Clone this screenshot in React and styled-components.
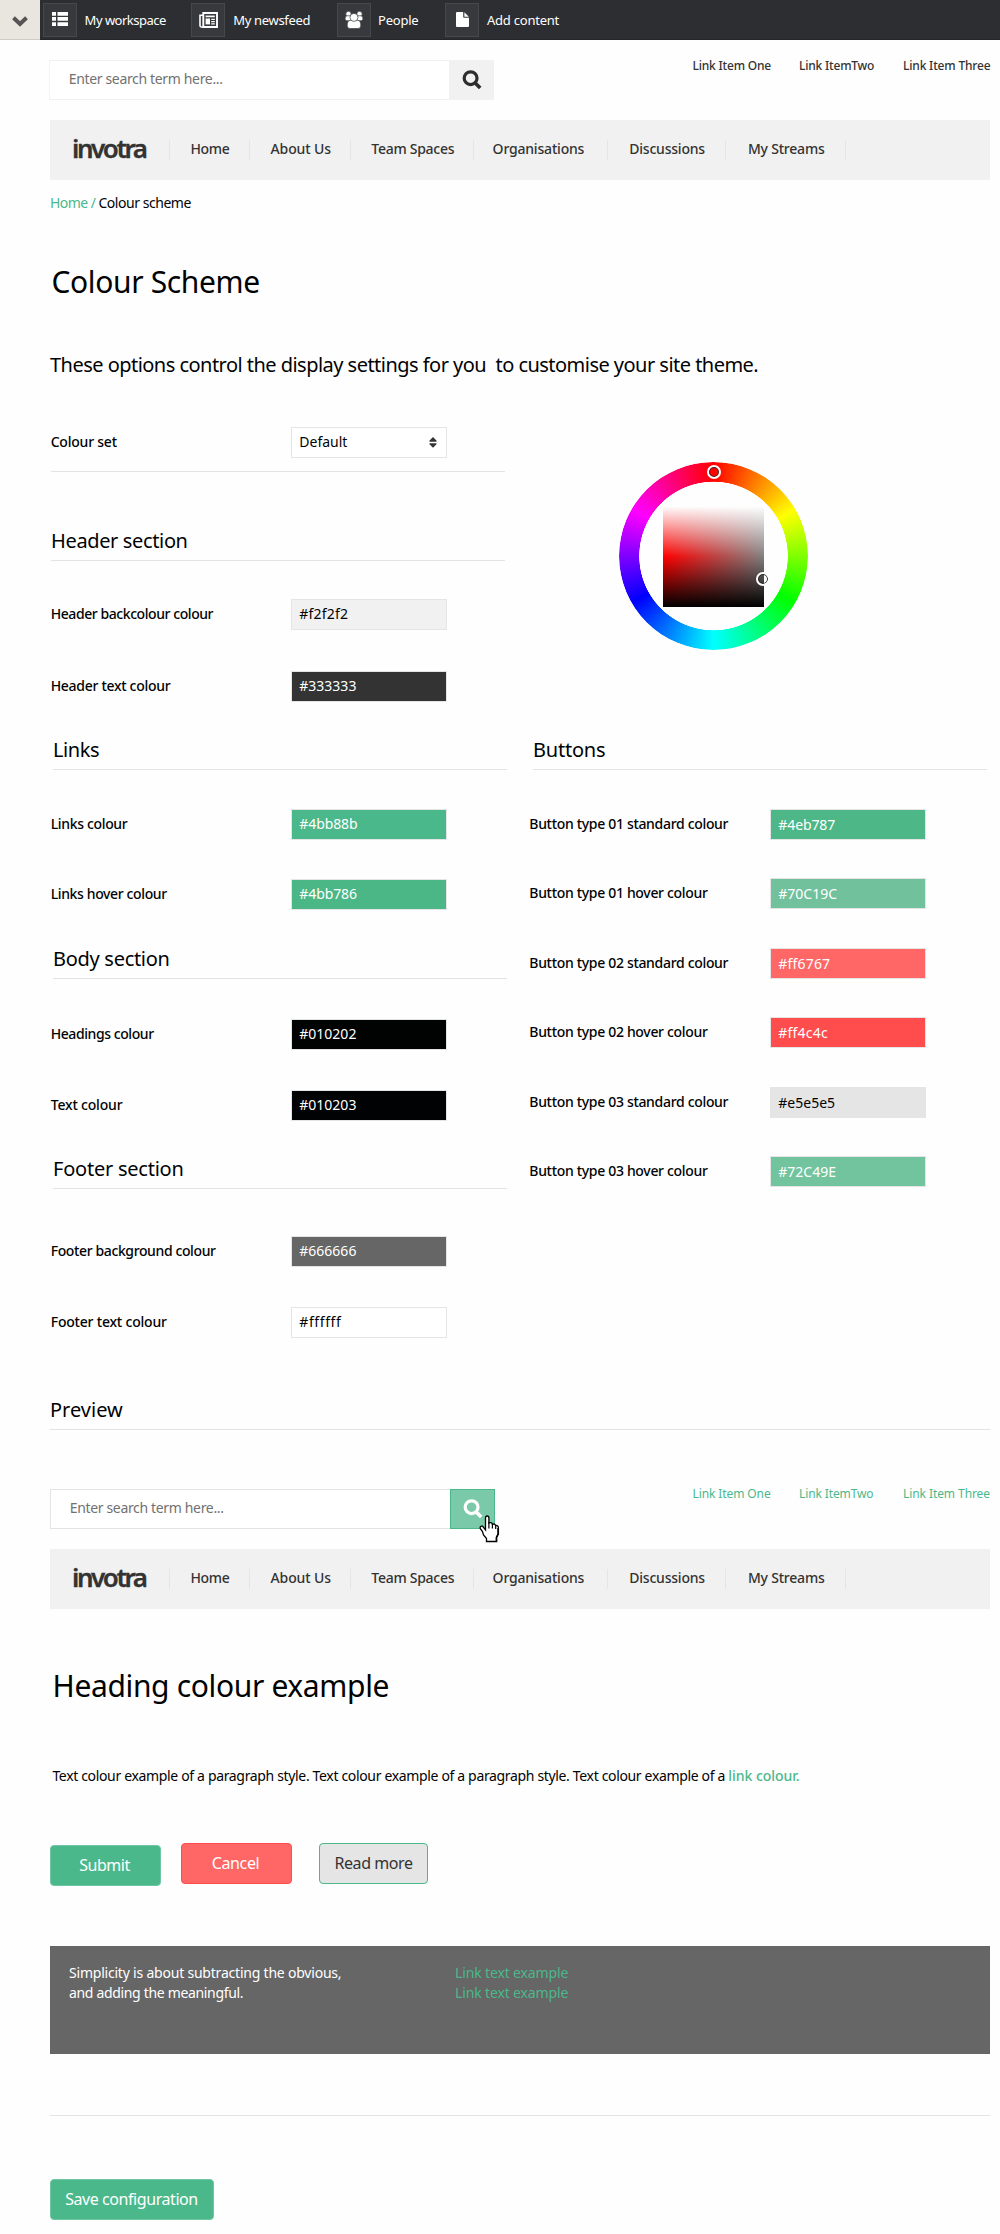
import React from 'react';
import styled, { createGlobalStyle } from 'styled-components';

const GlobalStyle = createGlobalStyle`
  *, *::before, *::after { box-sizing: border-box; }
  body {
    margin: 0;
    background: #fefefe;
    color: #010203;
    font-family: "Noto Sans", "Open Sans", sans-serif;
    font-size: 14px;
  }
  h1, h2, p { margin: 0; font-weight: 400; }
  a { color: inherit; text-decoration: none; }
`;

const Text = styled.span`
  letter-spacing: ${(p) => p.$track || 0}px;
  white-space: pre;
`;

/* ---------- toolbar ---------- */
const Toolbar = styled.div`
  display: flex;
  height: 40px;
  background: #2d2e32;
  border-bottom: 1px solid #252629;
`;
const Toggle = styled.div`
  display: flex;
  align-items: center;
  justify-content: center;
  width: 40px;
  height: 40px;
  margin-right: 3px;
  padding-top: 4px;
  background: #e9e5df;
  border-bottom: 1px solid #cfcbc5;
`;
const ToolItem = styled.a`
  display: flex;
  align-items: center;
  height: 40px;
  width: ${(p) => p.$w}px;
  color: #fff;
  font-size: 13px;
  line-height: 18px;
`;
const ToolIcon = styled.span`
  display: flex;
  align-items: center;
  justify-content: center;
  width: 34px;
  height: 34px;
  margin-right: ${(p) => p.$gap}px;
  padding-bottom: ${(p) => p.$lift || 0}px;
  background: #38393c;
  border: 1px solid #47484b;
  svg { display: block; }
`;

/* ---------- page ---------- */
const Page = styled.main`
  display: flex;
  flex-direction: column;
  width: 940px;
  height: 2194px;
  margin-left: 50px;
`;
const HeaderBar = styled.div`
  display: flex;
  justify-content: space-between;
  align-items: flex-start;
  margin-top: ${(p) => p.$top}px;
`;
const Search = styled.div`
  display: flex;
  width: 445px;
  height: 40px;
  margin: ${(p) => p.$drop}px 0 0 ${(p) => p.$left}px;
`;
const SearchField = styled.div`
  flex: 1;
  padding-left: 18.7px;
  border: 1px solid ${(p) => p.$line};
  border-right: 0;
  background: #fff;
  color: #717171;
  line-height: 35px;
`;
const SearchButton = styled.div`
  position: relative;
  display: flex;
  align-items: center;
  justify-content: center;
  width: 45px;
  background: ${(p) => p.$bg};
  border: 1px solid ${(p) => p.$line};
  color: ${(p) => p.$fg};
`;
const Pointer = styled.svg`
  position: absolute;
  left: 28px;
  top: 25px;
  z-index: 1;
`;
const TopLinks = styled.div`
  display: grid;
  grid-template-columns: 106.5px 104px 87px;
  color: ${(p) => p.$fg};
  font-size: 12px;
  font-weight: ${(p) => p.$weight};
  line-height: 17px;
`;
const Nav = styled.nav`
  display: flex;
  align-items: center;
  height: 60px;
  margin-top: 20px;
  background: #f1f1f1;
  color: #333;
`;
const NavItem = styled.a`
  width: ${(p) => p.$w}px;
  height: 20px;
  padding-left: ${(p) => p.$pad}px;
  border-right: 1px solid #e5e5e5;
  font-weight: 500;
  line-height: 17px;
`;
const Logo = styled(NavItem)`
  font-size: 26px;
  font-weight: 600;
  -webkit-text-stroke: 0.3px #333;
`;
const Breadcrumb = styled.div`
  margin-top: 13px;
  line-height: 19px;
`;
const Accent = styled.a`
  color: #4bb88b;
  font-weight: ${(p) => p.$weight || 400};
`;
const Title = styled.h1`
  margin-top: ${(p) => p.$top}px;
  padding-left: ${(p) => p.$pad}px;
  font-size: 30px;
  line-height: 41px;
  color: #010202;
`;
const Intro = styled.p`
  margin-top: 49px;
  font-size: 20px;
  line-height: 27px;
`;

/* ---------- form ---------- */
const Columns = styled.div`
  display: grid;
  grid-template-columns: 480px 460px;
  align-items: start;
  margin-top: 49px;
`;
const Column = styled.div`
  display: flex;
  flex-direction: column;
`;
const Field = styled.div`
  display: grid;
  grid-template-columns: ${(p) => (p.$right ? 240 : 241)}px 156px;
  height: 31px;
  margin-top: ${(p) => p.$top}px;
`;
const Label = styled.span`
  text-indent: ${(p) => (p.$right ? -0.7 : 0.7)}px;
  font-weight: 500;
  line-height: 29px;
`;
const Swatch = styled.span`
  display: flex;
  justify-content: space-between;
  padding: 0 9px 0 7.3px;
  background: ${(p) => p.$bg};
  border: 1px solid #e5e5e5;
  color: ${(p) => p.$fg};
  line-height: ${(p) => (p.$right ? 29 : 27)}px;
`;
const SectionTitle = styled.h2`
  width: ${(p) => p.$w || 454}px;
  height: 34px;
  margin: ${(p) => p.$top}px 0 0 ${(p) => p.$left}px;
  border-bottom: 1px solid #e3e3e3;
  font-size: 20px;
  line-height: 27px;
`;
const Rule = styled.div`
  width: ${(p) => p.$w}px;
  height: 1px;
  margin: ${(p) => p.$top}px 0 0 ${(p) => p.$left || 0}px;
  background: #e3e3e3;
`;
const SortIcon = styled.svg`
  margin-top: 9px;
`;

/* ---------- colour wheel ---------- */
const Wheel = styled.div`
  position: relative;
  display: flex;
  align-items: center;
  justify-content: center;
  width: 189px;
  height: 188px;
  margin: 35px 0 0 89px;
`;
const HueRing = styled.div`
  position: absolute;
  inset: 0;
  border-radius: 50%;
  background: conic-gradient(#f00, #ff0, #0f0, #0ff, #00f, #f0f, #f00);
  mask: radial-gradient(circle, transparent 74px, #000 74.6px);
`;
const Shade = styled.div`
  width: 101px;
  height: 101px;
  background:
    linear-gradient(#fff, rgba(255, 255, 255, 0) 50%, rgba(0, 0, 0, 0) 50%, #000),
    linear-gradient(90deg, #f00, #808080);
`;
const Marker = styled.span`
  position: absolute;
  left: ${(p) => p.$x}px;
  top: ${(p) => p.$y}px;
  width: 14px;
  height: 14px;
  border: 2px solid #fff;
  border-radius: 50%;
  box-shadow: inset 0 0 0 1px #222;
`;

/* ---------- preview ---------- */
const Paragraph = styled.p`
  margin-top: 60px;
  padding-left: 2.4px;
  line-height: 19px;
`;
const Buttons = styled.div`
  display: flex;
  align-items: flex-start;
  height: 43px;
  margin-top: 58px;
`;
const Button = styled.div`
  width: ${(p) => p.$w}px;
  height: 41px;
  margin: ${(p) => p.$top || 0}px 0 0 ${(p) => p.$left || 0}px;
  padding-right: ${(p) => p.$shift || 0}px;
  background: ${(p) => p.$bg};
  border: 1px solid ${(p) => p.$line};
  border-radius: 4px;
  color: ${(p) => p.$fg || '#fff'};
  font-size: 16px;
  line-height: 38px;
  text-align: center;
`;
const Footer = styled.footer`
  display: grid;
  grid-template-columns: 386px 1fr;
  height: 108px;
  margin-top: 60px;
  padding: 17px 0 0 19px;
  background: #666;
  color: #fff;
  line-height: 20px;
`;
const Lines = styled.div`
  display: flex;
  flex-direction: column;
`;

const SearchIcon = () => (
  <svg width="20" height="20" viewBox="0 0 20 20" fill="none" stroke="currentColor">
    <circle cx="8.6" cy="8.2" r="6.4" strokeWidth="3.2" />
    <path d="M13.2 13 18.2 18" strokeWidth="3.6" />
  </svg>
);
const ListIcon = () => (
  <svg width="16" height="14" viewBox="0 0 16 14" fill="#fff">
    <path d="M0 0h4v3.700H0zM5.500 0H16v3.700H5.500zM0 5.100h4v3.700H0zM5.500 5.100H16v3.700H5.500zM0 10.300h4V14H0zM5.500 10.300H16V14H5.500z" />
  </svg>
);
const NewsIcon = () => (
  <svg width="19" height="16" viewBox="0 0 19 16" fill="none" stroke="#fff">
    <path d="M4.300 1H18V15H4.300z" strokeWidth="1.900" />
    <path d="M4 3.200H1V13.500Q1 15 2.500 15H5" strokeWidth="1.600" />
    <path d="M6.600 4.400H15.800" strokeWidth="1.700" />
    <path d="M6.600 6.500H11V12.400H6.600z" fill="#fff" stroke="none" />
    <path d="M12.200 7.300H15.800M12.200 9.600H15.800M12.200 11.800H15.800" strokeWidth="1.200" />
  </svg>
);
const PeopleIcon = () => (
  <svg width="18" height="18" viewBox="0 0 18 18" fill="#fff" stroke="#38393c" strokeWidth=".7">
    <circle cx="3.500" cy="3" r="2.700" />
    <circle cx="14.500" cy="3" r="2.700" />
    <path d="M0 8.200Q0 4.800 2.200 4.800H15.800Q18 4.800 18 8.200L16.500 9.800H1.500z" />
    <path d="M2.200 14.500Q2.200 9.300 5.500 9.300H12.500Q15.800 9.300 15.800 14.500Q15.800 17.600 13 17.600H5Q2.200 17.600 2.200 14.500z" />
    <circle cx="9" cy="6.400" r="4" />
  </svg>
);
const FileIcon = () => (
  <svg width="13" height="15" viewBox="0 0 13 15" fill="#fff">
    <path d="M1 0H7.200V4.800Q7.200 5.800 8.200 5.800H13V14Q13 15 12 15H1Q0 15 0 14V1Q0 0 1 0z" />
    <path d="M8.400 .2 12.800 4.700H8.400z" />
  </svg>
);
const ChevronIcon = () => (
  <svg width="16" height="11" viewBox="0 0 16 11" fill="none" stroke="#555" strokeWidth="4">
    <path d="M1.500 1.800 8 8 14.500 1.800" />
  </svg>
);
const HandPointer = () => (
  <Pointer width="21" height="28" viewBox="0 0 21 28">
    <path
      d="M6.500 15V3Q6.500 1 8.200 1T9.900 3V8Q13 7 13.500 9.300Q16 8.300 16.600 10.500Q19.400 10.200 19.400 13V19L17.700 22.500V26.500H7.500V23.500L4.500 20L3.500 16.500L1.200 13.500Q.8 10.700 3.500 11.200L6.500 15z"
      fill="#fff"
      stroke="#000"
      strokeWidth="1.300"
    />
    <path d="M9.900 7V13.500M13.400 9V13.500M16.700 10V14M18.900 13V19L17.200 22.300V26.500" fill="none" stroke="#000" strokeWidth="1.200" />
  </Pointer>
);

const tools = [
  { text: 'My workspace', w: 148, gap: 7.6, track: -0.5, lift: 2, icon: <ListIcon /> },
  { text: 'My newsfeed', w: 146, gap: 8.2, track: -0.32, lift: 0, icon: <NewsIcon /> },
  { text: 'People', w: 108, gap: 7, track: -0.21, lift: 0, icon: <PeopleIcon /> },
  { text: 'Add content', w: 120, gap: 8, track: -0.23, lift: 1, icon: <FileIcon /> },
];
const navItems = [
  ['Home', 80, 20.5, -0.35],
  ['About Us', 101, 20.5, -0.1],
  ['Team Spaces', 123, 20.3, -0.27],
  ['Organisations', 134, 18.6, -0.19],
  ['Discussions', 118, 21.3, -0.22],
  ['My Streams', 120, 21.9, -0.2],
];

const Navigation = () => (
  <Nav>
    <Logo $w={120} $pad={22}><Text $track={-2.45}>invotra</Text></Logo>
    {navItems.map(([text, w, pad, track]) => (
      <NavItem key={text} $w={w} $pad={pad}><Text $track={track}>{text}</Text></NavItem>
    ))}
  </Nav>
);
const HeaderLinks = ({ fg, weight }) => (
  <TopLinks $fg={fg} $weight={weight}>
    <Text $track={weight === 500 ? -0.2 : -0.1}>Link Item One</Text>
    <Text $track={weight === 500 ? -0.2 : -0.12}>Link ItemTwo</Text>
    <Text $track={weight === 500 ? -0.18 : -0.08}>Link Item Three</Text>
  </TopLinks>
);
const ColourField = ({ label, track, value, vtrack = 0, bg = value, fg = '#fff', top, right }) => (
  <Field $top={top} $right={right}>
    <Label $right={right}><Text $track={track}>{label}</Text></Label>
    <Swatch $bg={bg} $fg={fg} $right={right}><Text $track={vtrack}>{value}</Text></Swatch>
  </Field>
);

export default function App() {
  return (
    <>
      <GlobalStyle />
      <Toolbar>
        <Toggle><ChevronIcon /></Toggle>
        {tools.map((t) => (
          <ToolItem key={t.text} $w={t.w}>
            <ToolIcon $gap={t.gap} $lift={t.lift}>{t.icon}</ToolIcon>
            <Text $track={t.track}>{t.text}</Text>
          </ToolItem>
        ))}
      </Toolbar>
      <Page>
        <HeaderBar $top={17}>
          <Search $drop={3} $left={-1}>
            <SearchField $line="#f1f1f1"><Text $track={-0.34}>Enter search term here...</Text></SearchField>
            <SearchButton $bg="#f1f1f1" $line="#f1f1f1" $fg="#2d2d2d"><SearchIcon /></SearchButton>
          </Search>
          <HeaderLinks fg="#333" weight={500} />
        </HeaderBar>
        <Navigation />
        <Breadcrumb>
          <Accent><Text $track={-0.55}>Home / </Text></Accent>
          <Text $track={-0.46}>Colour scheme</Text>
        </Breadcrumb>
        <Title $top={49} $pad={1.5}><Text $track={-0.37}>Colour Scheme</Text></Title>
        <Intro><Text $track={-0.53}>{'These options control the display settings for you  to customise your site theme.'}</Text></Intro>

        <Columns>
          <Column>
            <Field $top={0}>
              <Label><Text $track={-0.22}>Colour set</Text></Label>
              <Swatch $bg="#fff" $fg="#010203">
                <Text $track={0}>Default</Text>
                <SortIcon width="8" height="11" viewBox="0 0 8 11" fill="#333">
                  <path d="M4 0 7.500 3.600V4.700H.5V3.600zM.5 6.200H7.500V7.300L4 10.800.5 7.300z" />
                </SortIcon>
              </Swatch>
            </Field>
            <Rule $top={13} $left={1} $w={454} />
            <SectionTitle $top={55} $left={1}><Text $track={-0.36}>Header section</Text></SectionTitle>
            <ColourField top={38} label="Header backcolour colour" track={-0.43} value="#f2f2f2" bg="#f1f1f1" fg="#010203" vtrack={0.2} />
            <ColourField top={41} label="Header text colour" track={-0.3} value="#333333" />
            <SectionTitle $top={34} $left={3}><Text $track={-0.39}>Links</Text></SectionTitle>
            <ColourField top={39} label="Links colour" track={-0.34} value="#4bb88b" vtrack={-0.1} />
            <ColourField top={39} label="Links hover colour" track={-0.37} value="#4bb786" vtrack={-0.1} />
            <SectionTitle $top={35} $left={3}><Text $track={-0.29}>Body section</Text></SectionTitle>
            <ColourField top={40} label="Headings colour" track={-0.42} value="#010202" />
            <ColourField top={40} label="Text colour" track={-0.18} value="#010203" />
            <SectionTitle $top={34} $left={3}><Text $track={-0.23}>Footer section</Text></SectionTitle>
            <ColourField top={47} label="Footer background colour" track={-0.38} value="#666666" />
            <ColourField top={40} label="Footer text colour" track={-0.2} value="#ffffff" fg="#010203" vtrack={0.6} />
          </Column>
          <Column>
            <Wheel>
              <HueRing />
              <Shade />
              <Marker $x={87.5} $y={3} />
              <Marker $x={137} $y={110} />
            </Wheel>
            <SectionTitle $top={86} $left={3}><Text $track={-0.22}>Buttons</Text></SectionTitle>
            <ColourField right top={39} label="Button type 01 standard colour" track={-0.32} value="#4eb787" vtrack={-0.1} />
            <ColourField right top={38} label="Button type 01 hover colour" track={-0.32} value="#70C19C" />
            <ColourField right top={39} label="Button type 02 standard colour" track={-0.32} value="#ff6767" vtrack={0.18} />
            <ColourField right top={38} label="Button type 02 hover colour" track={-0.32} value="#ff4c4c" vtrack={0.2} />
            <ColourField right top={39} label="Button type 03 standard colour" track={-0.32} value="#e5e5e5" fg="#010203" />
            <ColourField right top={38} label="Button type 03 hover colour" track={-0.32} value="#72C49E" />
          </Column>
        </Columns>

        <SectionTitle $top={58} $left={0} $w={940}><Text $track={0}>Preview</Text></SectionTitle>
        <HeaderBar $top={55}>
          <Search $drop={4} $left={0}>
            <SearchField $line="#e3e3e3"><Text $track={-0.34}>Enter search term here...</Text></SearchField>
            <SearchButton $bg="#7ac9a8" $line="#4bb88b" $fg="#fff">
              <SearchIcon />
              <HandPointer />
            </SearchButton>
          </Search>
          <HeaderLinks fg="#4bb88b" weight={400} />
        </HeaderBar>
        <Navigation />
        <Title $top={56} $pad={2.5}><Text $track={-0.35}>Heading colour example</Text></Title>
        <Paragraph>
          <Text $track={-0.34}>Text colour example of a paragraph style. Text colour example of a paragraph style. Text colour example of a </Text>
          <Accent $weight={500}><Text $track={-0.05}>link colour.</Text></Accent>
        </Paragraph>
        <Buttons>
          <Button $w={111} $top={2} $shift={2} $bg="#4bb88b" $line="#70c5a2"><Text $track={-0.45}>Submit</Text></Button>
          <Button $w={111} $left={20} $shift={2} $bg="#ff6767" $line="#ff4c4c"><Text $track={-0.37}>Cancel</Text></Button>
          <Button $w={109} $left={27} $bg="#e5e5e5" $line="#4bb88b" $fg="#333"><Text $track={-0.44}>Read more</Text></Button>
        </Buttons>
        <Footer>
          <Lines>
            <Text $track={-0.21}>Simplicity is about subtracting the obvious,</Text>
            <Text $track={-0.33}>and adding the meaningful.</Text>
          </Lines>
          <Lines>
            <Accent><Text $track={-0.14}>Link text example</Text></Accent>
            <Accent><Text $track={-0.14}>Link text example</Text></Accent>
          </Lines>
        </Footer>
        <Rule $top={61} $w={940} />
        <Button $w={164} $top={63} $shift={1} $bg="#4bb88b" $line="#70c5a2"><Text $track={-0.43}>Save configuration</Text></Button>
      </Page>
    </>
  );
}
